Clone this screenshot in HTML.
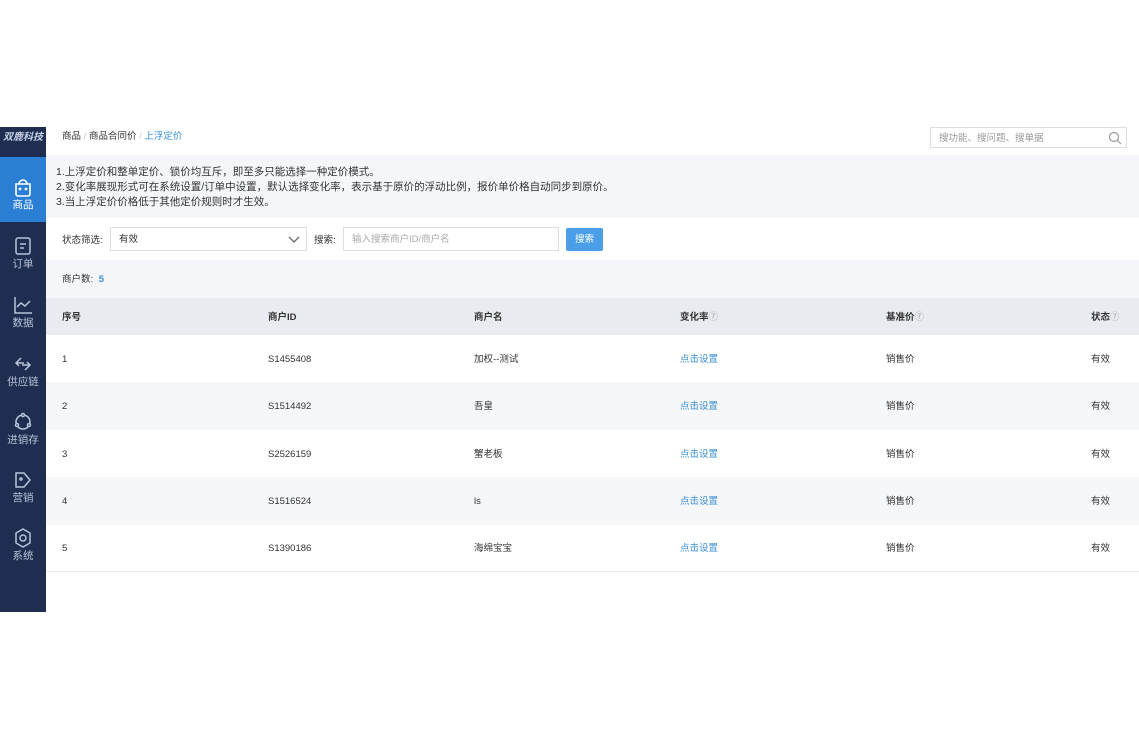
<!DOCTYPE html>
<html><head><meta charset="utf-8"><style>
*{margin:0;padding:0;box-sizing:border-box}
body{width:1139px;height:739px;background:#fff;font-family:"Liberation Sans","Noto Sans CJK SC",sans-serif;font-size:10px;color:#333;position:relative;overflow:hidden}
.abs{position:absolute}
.side{left:0;top:127px;width:46px;height:485px;background:#1f2e50}
.logo{left:0;top:127px;width:46px;height:22px;color:#c8d2e8;font-size:10px;font-style:italic;font-weight:bold;text-align:center;line-height:22px}
.nav{left:0;width:46px;height:58px;color:#b9c3d8;text-align:center;font-size:10.5px;line-height:13px}
.nav svg{display:block;margin:0 auto 1px}
.act{background:#2a7fd4;color:#fff}
.row{left:46px;width:1093px}
.cell{position:absolute;top:50%;margin-top:-6px;height:14px;line-height:14px;font-size:9.5px;white-space:nowrap}
.lnk{color:#3a8fd4}
</style></head><body>
<div class="abs side"></div>
<div class="abs logo">双鹿科技</div>
<div class="abs act" style="left:0;top:157px;width:46px;height:65px"></div>
<div class="abs nav" style="top:176px;color:#fff"><svg width="22" height="22" viewBox="0 0 22 22" fill="none" stroke="#fff" stroke-width="1.6"><path d="M4 8h14v10a2 2 0 0 1-2 2H6a2 2 0 0 1-2-2z"/><path d="M7 8a4 4 0 0 1 8 0"/><circle cx="8" cy="13" r=".6"/><circle cx="14" cy="13" r=".6"/></svg>商品</div>
<div class="abs" style="left:42px;top:196px;width:0;height:0;border:4px solid transparent;border-right-color:#fff"></div>
<div class="abs nav" style="top:235px"><svg width="20" height="22" viewBox="0 0 20 22" fill="none" stroke="#b9c3d8" stroke-width="1.5"><rect x="3" y="3" width="14" height="16" rx="2"/><path d="M7 9h6M7 13h4"/></svg>订单</div>
<div class="abs nav" style="top:294px"><svg width="22" height="22" viewBox="0 0 22 22" fill="none" stroke="#b9c3d8" stroke-width="1.5"><path d="M3 3v16h17"/><path d="M5 13l4-4 4 3 5-5"/></svg>数据</div>
<div class="abs nav" style="top:353px"><svg width="22" height="22" viewBox="0 0 22 22" fill="none" stroke="#b9c3d8" stroke-width="1.5"><path d="M9 5l-5 5 3 3M13 17l5-5-3-3M4 10h8M10 12h8"/></svg>供应链</div>
<div class="abs nav" style="top:411px"><svg width="22" height="22" viewBox="0 0 22 22" fill="none" stroke="#b9c3d8" stroke-width="1.5"><circle cx="11" cy="11" r="7"/><circle cx="11" cy="4" r="1.5" fill="#1f2e50"/><circle cx="5" cy="14" r="1.5" fill="#1f2e50"/><circle cx="17" cy="14" r="1.5" fill="#1f2e50"/></svg>进销存</div>
<div class="abs nav" style="top:469px"><svg width="22" height="22" viewBox="0 0 22 22" fill="none" stroke="#b9c3d8" stroke-width="1.5"><path d="M4 4h8l6 7-6 7H4z"/><circle cx="9" cy="10" r="1"/></svg>营销</div>
<div class="abs nav" style="top:527px"><svg width="22" height="22" viewBox="0 0 22 22" fill="none" stroke="#b9c3d8" stroke-width="1.5"><path d="M11 2l7 4v10l-7 4-7-4V6z"/><circle cx="11" cy="11" r="3"/></svg>系统</div>

<div class="abs" style="left:62px;top:130px;font-size:9.5px;line-height:14px"><span>商品</span><span style="color:#ccc"> / </span><span>商品合同价</span><span style="color:#ccc"> / </span><span class="lnk">上浮定价</span></div>
<div class="abs" style="left:930px;top:127px;width:197px;height:21px;border:1px solid #dcdfe6;color:#999;font-size:9.5px;padding:3px 8px 0;line-height:15px">搜功能、搜问题、搜单据<svg class="abs" style="right:4px;top:3px" width="14" height="14" viewBox="0 0 14 14" fill="none" stroke="#999" stroke-width="1.2"><circle cx="6" cy="6" r="4.5"/><path d="M9.5 9.5l3.5 3.5"/></svg></div>

<div class="abs row" style="top:155px;height:63px;background:#f4f6f9"></div>
<div class="abs" style="left:56px;top:165px;font-size:10.5px;line-height:15px;color:#333">1.上浮定价和整单定价、锁价均互斥，即至多只能选择一种定价模式。<br>2.变化率展现形式可在系统设置/订单中设置，默认选择变化率，表示基于原价的浮动比例，报价单价格自动同步到原价。<br>3.当上浮定价价格低于其他定价规则时才生效。</div>

<div class="abs" style="left:62px;top:232px;font-size:9.5px">状态筛选:</div>
<div class="abs" style="left:110px;top:227px;width:197px;height:24px;border:1px solid #dcdfe6;padding:5px 8px 0;line-height:14px;font-size:9.5px">有效<svg class="abs" style="right:6px;top:8px" width="12" height="8" viewBox="0 0 12 8" fill="none" stroke="#666" stroke-width="1.3"><path d="M1 1l5 5 5-5"/></svg></div>
<div class="abs" style="left:314px;top:232px;font-size:9.5px">搜索:</div>
<div class="abs" style="left:343px;top:227px;width:216px;height:24px;border:1px solid #dcdfe6;padding:5px 8px 0;line-height:14px;font-size:9.5px;color:#aaa">输入搜索商户ID/商户名</div>
<div class="abs" style="left:566px;top:228px;width:37px;height:23px;background:#4a9fe8;color:#fff;font-size:9.5px;text-align:center;line-height:23px;border-radius:2px">搜索</div>

<div class="abs row" style="top:260px;height:38px;background:#f4f6f9"></div>
<div class="abs" style="left:62px;top:273px;font-size:9.5px;line-height:14px">商户数: <b class="lnk" style="margin-left:3px">5</b></div>

<div class="abs row" style="top:298px;height:37px;background:#e9ebf0;font-weight:bold">
<div class="cell" style="left:16px">序号</div><div class="cell" style="left:222px">商户ID</div><div class="cell" style="left:428px">商户名</div><div class="cell" style="left:634px">变化率<span style="color:#aaa;font-weight:normal">⑦</span></div><div class="cell" style="left:840px">基准价<span style="color:#aaa;font-weight:normal">⑦</span></div><div class="cell" style="left:1045px">状态<span style="color:#aaa;font-weight:normal">⑦</span></div></div>

<div class="abs row" style="top:335px;height:47px;background:#fff"><div class="cell" style="left:16px">1</div><div class="cell" style="left:222px">S1455408</div><div class="cell" style="left:428px">加权--测试</div><div class="cell lnk" style="left:634px">点击设置</div><div class="cell" style="left:840px">销售价</div><div class="cell" style="left:1045px">有效</div></div>
<div class="abs row" style="top:382px;height:48px;background:#f6f7f9"><div class="cell" style="left:16px">2</div><div class="cell" style="left:222px">S1514492</div><div class="cell" style="left:428px">吾皇</div><div class="cell lnk" style="left:634px">点击设置</div><div class="cell" style="left:840px">销售价</div><div class="cell" style="left:1045px">有效</div></div>
<div class="abs row" style="top:430px;height:47px;background:#fff"><div class="cell" style="left:16px">3</div><div class="cell" style="left:222px">S2526159</div><div class="cell" style="left:428px">蟹老板</div><div class="cell lnk" style="left:634px">点击设置</div><div class="cell" style="left:840px">销售价</div><div class="cell" style="left:1045px">有效</div></div>
<div class="abs row" style="top:477px;height:48px;background:#f6f7f9"><div class="cell" style="left:16px">4</div><div class="cell" style="left:222px">S1516524</div><div class="cell" style="left:428px">ls</div><div class="cell lnk" style="left:634px">点击设置</div><div class="cell" style="left:840px">销售价</div><div class="cell" style="left:1045px">有效</div></div>
<div class="abs row" style="top:525px;height:47px;background:#fff;border-bottom:1px solid #e6e8ec"><div class="cell" style="left:16px">5</div><div class="cell" style="left:222px">S1390186</div><div class="cell" style="left:428px">海绵宝宝</div><div class="cell lnk" style="left:634px">点击设置</div><div class="cell" style="left:840px">销售价</div><div class="cell" style="left:1045px">有效</div></div>
</body></html>
